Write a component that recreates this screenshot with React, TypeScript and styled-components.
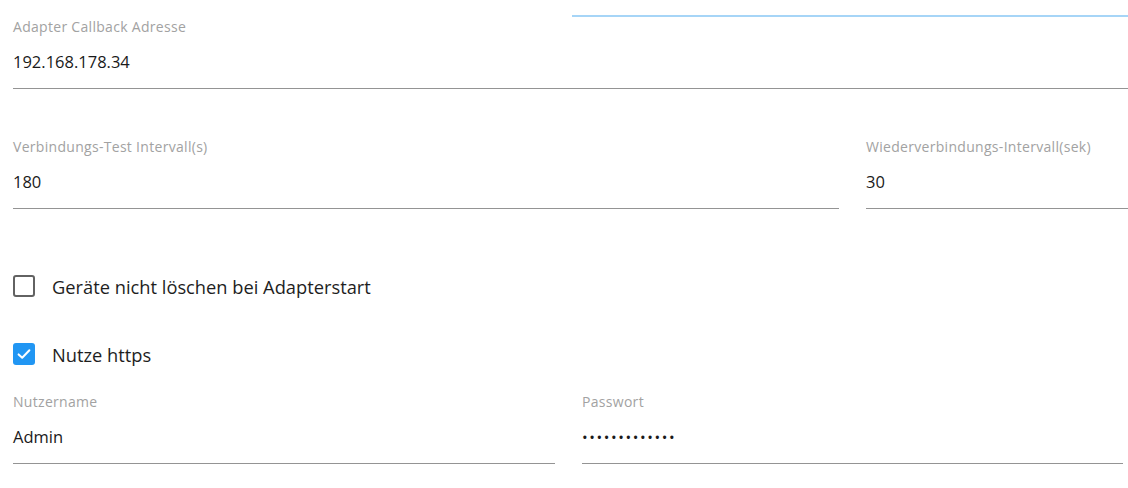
import styled, { createGlobalStyle } from "styled-components";

const GlobalStyle = createGlobalStyle`
  body {
    margin: 0;
    background: #fff;
    font-family: "Open Sans", "Noto Sans", sans-serif;
    overflow: hidden;
  }
`;

type FieldProps = {
  label: string;
  value: string;
  width: string;
  secret?: boolean;
};

const Field = ({ label, value, width, secret = false }: FieldProps) => (
  <FieldBox $width={width}>
    <Label>{label}</Label>
    <Value $secret={secret}>{value}</Value>
  </FieldBox>
);

type CheckProps = {
  label: string;
  checked?: boolean;
};

const Check = ({ label, checked = false }: CheckProps) => (
  <CheckRow>
    <Box $checked={checked}>
      {checked && (
        <svg width="18" height="18" viewBox="0 0 18 18">
          <path
            d="M3.6 9.4l3.6 3.4 7.2-7.6"
            fill="none"
            stroke="#fff"
            strokeWidth="2"
            strokeLinecap="round"
            strokeLinejoin="round"
          />
        </svg>
      )}
    </Box>
    <CheckLabel>{label}</CheckLabel>
  </CheckRow>
);

const App = () => {
  return (
    <>
      <GlobalStyle />
      <Page>
        <TabIndicator />
        <Row>
          <Field
            label="Adapter Callback Adresse"
            value="192.168.178.34"
            width="1115px"
          />
        </Row>
        <Row $top="50px">
          <Field
            label="Verbindungs-Test Intervall(s)"
            value="180"
            width="826px"
          />
          <Field
            label="Wiederverbindungs-Intervall(sek)"
            value="30"
            width="262px"
          />
        </Row>
        <Checks>
          <Check label="Geräte nicht löschen bei Adapterstart" />
          <Check label="Nutze https" checked />
        </Checks>
        <Row $top="29px">
          <Field label="Nutzername" value="Admin" width="542px" />
          <Field
            label="Passwort"
            value="•••••••••••••"
            width="541px"
            secret
          />
        </Row>
      </Page>
    </>
  );
};

export default App;

const Page = styled.div`
  width: 1128px;
  height: 488px;
  padding: 15px 0 0 13px;
  box-sizing: border-box;
  overflow: hidden;
`;

const TabIndicator = styled.div`
  height: 2px;
  margin-left: 559px;
  margin-bottom: 2px;
  background: #a6d5f7;
`;

const Row = styled.div<{ $top?: string }>`
  display: flex;
  gap: 27px;
  margin-top: ${({ $top }) => $top || "0"};
`;

const FieldBox = styled.div<{ $width: string }>`
  width: ${({ $width }) => $width};
  flex: none;
  display: flex;
  flex-direction: column;
`;

const Label = styled.div`
  font-size: 14px;
  letter-spacing: 0.3px;
  line-height: 16px;
  height: 16px;
  color: #a2a2a2;
  white-space: nowrap;
`;

const Value = styled.div<{ $secret: boolean }>`
  padding: 17px 0 16px;
  font-size: ${({ $secret }) => ($secret ? "15px" : "16.5px")};
  letter-spacing: ${({ $secret }) => ($secret ? "1.6px" : "0")};
  line-height: 20px;
  height: 20px;
  color: #1a1a1a;
  border-bottom: 1px solid #949494;
  white-space: nowrap;
`;

const Checks = styled.div`
  display: flex;
  flex-direction: column;
  gap: 46px;
  margin-top: 66px;
`;

const CheckRow = styled.div`
  display: flex;
  align-items: center;
  gap: 17px;
  height: 22px;
`;

const Box = styled.div<{ $checked: boolean }>`
  width: 22px;
  height: 22px;
  box-sizing: border-box;
  border-radius: 3px;
  display: flex;
  align-items: center;
  justify-content: center;
  background: ${({ $checked }) => ($checked ? "#2196f3" : "#fff")};
  border: ${({ $checked }) => ($checked ? "none" : "2px solid #626262")};
`;

const CheckLabel = styled.span`
  font-size: 18.3px;
  line-height: 22px;
  padding-top: 2px;
  color: #1e1e1e;
  white-space: nowrap;
`;
